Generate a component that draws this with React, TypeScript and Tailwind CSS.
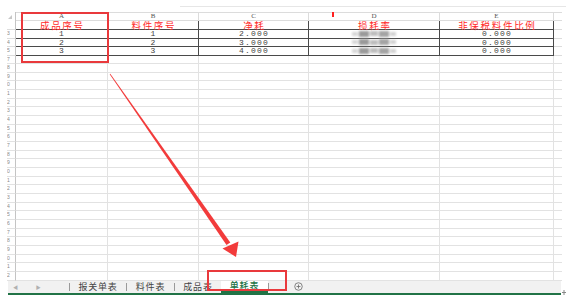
import clsx from "clsx";

const LIGHT = "border-[#dcdcdc]";

// column widths (border-box, right border sits on the grid line)
const cols = [
  { w: "w-[92px]", letter: "A", head: "成品序号", key: "a" },
  { w: "w-[91px]", letter: "B", head: "料件序号", key: "b" },
  { w: "w-[110px]", letter: "C", head: "净耗", key: "c" },
  { w: "w-[131px]", letter: "D", head: "损耗率", key: "d" },
  { w: "w-[114px]", letter: "E", head: "非保税料件比例", key: "e" },
];

const data = [
  { a: "1", b: "1", c: "2.000", e: "0.000" },
  { a: "2", b: "2", c: "3.000", e: "0.000" },
  { a: "3", b: "3", c: "4.000", e: "0.000" },
];

const emptyRows = Array.from({ length: 26 }, (_, i) => i + 7);

function RowHead({ n, h, dark }: { n?: number; h: string; dark?: boolean }) {
  return (
    <div className={clsx("w-[16px] shrink-0 flex", h)}>
      <div className="w-[7px]" />
      <div
        className={clsx(
          "flex-1 border-r-[1.5px] border-r-[#c4c4c4] border-b overflow-hidden text-[5px] leading-[7px] text-[#888] font-['Liberation_Sans',sans-serif]",
          dark ? "border-b-[#dcdcdc]" : "border-b-[#e2e2e2]"
        )}
      >
        {n !== undefined ? n % 10 : null}
      </div>
    </div>
  );
}

function Mosaic() {
  return (
    <div className="flex items-center gap-[1px] blur-[0.8px]">
      <div className="w-[6px] h-[4px] bg-[#d6d6d6]" />
      <div className="w-[10px] h-[6px] bg-[#9a9a9a]" />
      <div className="w-[8px] h-[5px] bg-[#bdbdbd]" />
      <div className="w-[10px] h-[6px] bg-[#a4a4a4]" />
      <div className="w-[6px] h-[4px] bg-[#d2d2d2]" />
    </div>
  );
}

function Sheet() {
  return (
    <div className="flex flex-col">
      {/* column letters */}
      <div className="flex h-[9px]">
        <div className="w-[16px] shrink-0 flex items-center justify-end pr-[3px] border-r-[1.5px] border-r-[#c4c4c4]">
          <svg width="4" height="4" viewBox="0 0 4 4">
            <polygon points="4,0 4,4 0,4" fill="#c8c8c8" />
          </svg>
        </div>
        {cols.map((c) => (
          <div
            key={c.key}
            className={clsx(
              c.w,
              "shrink-0 flex items-center justify-center border-r border-b border-t",
              LIGHT,
              "text-[7px] leading-[7px] text-[#555] font-['Liberation_Serif',serif]"
            )}
          >
            {c.letter}
          </div>
        ))}
        <div className={clsx("w-[8px] shrink-0 border-b border-t", LIGHT)} />
      </div>

      {/* red header row */}
      <div className="flex h-[9px]">
        <RowHead h="h-[9px]" dark />
        {cols.map((c, i) => (
          <div
            key={c.key}
            className={clsx(
              c.w,
              "shrink-0 flex items-center justify-center border-r border-b border-b-[#4a4a4a]",
              i === 0 ? "border-r-[#dcdcdc]" : "border-r-[#4a4a4a]",
              "text-[9.5px] leading-[8px] tracking-[1.7px] text-[#ff2a2a] font-['Noto_Sans_CJK_SC',sans-serif]"
            )}
          >
            <span className="pl-[1.7px]">{c.head}</span>
          </div>
        ))}
        <div className={clsx("w-[8px] shrink-0 border-b", LIGHT)} />
      </div>

      {/* data rows */}
      {data.map((r, ri) => (
        <div key={ri} className="flex h-[8.5px]">
          <RowHead n={ri + 3} h="h-[8.5px]" dark />
          {cols.map((c, i) => (
            <div
              key={c.key}
              className={clsx(
                c.w,
                "shrink-0 flex items-center justify-center border-r border-b border-b-[#4a4a4a]",
                i === 0 ? "border-r-[#dcdcdc]" : "border-r-[#4a4a4a]",
                "text-[8px] leading-[7px] tracking-[1.2px] text-[#444] font-['Liberation_Mono',monospace]"
              )}
            >
              {c.key === "d" ? <Mosaic /> : <span className="pl-[1.2px]">{r[c.key as "a" | "b" | "c" | "e"]}</span>}
            </div>
          ))}
          <div className={clsx("w-[8px] shrink-0 border-b", LIGHT)} />
        </div>
      ))}

      {/* empty rows */}
      {emptyRows.map((n) => (
        <div key={n} className="flex h-[8.67px]">
          <RowHead n={n} h="h-[8.67px]" />
          {cols.map((c) => (
            <div
              key={c.key}
              className={clsx(c.w, "shrink-0 border-r border-b", "border-[#e2e2e2]")}
            />
          ))}
          <div className="w-[8px] shrink-0 border-b border-[#e2e2e2]" />
        </div>
      ))}
    </div>
  );
}

function TabBar() {
  return (
    <div className="flex">
      <div className="ml-[8px] w-[554px] flex flex-col">
        <div className="h-[12px] bg-[#f1f1f1] flex items-stretch text-[9px] tracking-[0.8px] text-[#444] font-['Noto_Sans_CJK_SC',sans-serif]">
          <div className="w-[61px] flex items-center text-[5px] text-[#b0b0b0]">
            <span className="ml-[5px]">◀</span>
            <span className="ml-[17px]">▶</span>
          </div>
          <div className="w-px my-[2px] bg-[#9a9a9a]" />
          <div className="w-[56px] flex items-center justify-center">报关单表</div>
          <div className="w-px my-[2px] bg-[#9a9a9a]" />
          <div className="w-[47px] flex items-center justify-center">料件表</div>
          <div className="w-px my-[2px] bg-[#9a9a9a]" />
          <div className="w-[46px] flex items-center justify-center">成品表</div>
          <div className="w-[47px] bg-white border-b-2 border-[#217346] flex items-center justify-center text-[#217346] font-medium">
            单耗表
          </div>
          <div className="w-px my-[2px] bg-[#9a9a9a]" />
          <div className="ml-[25px] flex items-center">
            <svg width="9" height="9" viewBox="0 0 10 10">
              <circle cx="5" cy="5" r="4.2" fill="none" stroke="#6a6a6a" strokeWidth="0.9" />
              <path d="M5 2.8v4.4M2.8 5h4.4" stroke="#6a6a6a" strokeWidth="0.9" />
            </svg>
          </div>
        </div>
        <div className="h-[2px] bg-[#217346]" />
      </div>
      <div className="flex items-end pl-[1px]">
        <svg width="4" height="5" viewBox="0 0 4 5">
          <path d="M2 0v5M0 2.5h4" stroke="#888" strokeWidth="1" />
        </svg>
      </div>
    </div>
  );
}

function Annotations() {
  return (
    <>
      {/* red frame around column A */}
      <div className="absolute left-[21px] top-[12px] w-[88px] h-[51px] border-2 border-[#e9393c]" />
      {/* red frame around active tab */}
      <div className="absolute left-[207px] top-[270px] w-[80px] h-[21px] border-2 border-[#e9393c]" />
      {/* stray red tick */}
      <div className="absolute left-[332px] top-[12px] w-[2px] h-[5px] bg-[#ff2020]" />
      {/* arrow */}
      <svg className="absolute inset-0 pointer-events-none" width="566" height="305" viewBox="0 0 566 305">
        <polygon
          points="109.7,74.2 110.3,73.8 230.3,242.5 226.5,245.1"
          fill="#f23b3b"
        />
        <polygon points="222.5,248.5 238.5,241.5 236,257" fill="#f23b3b" />
      </svg>
    </>
  );
}

export default function App() {
  return (
    <div className="relative w-[566px] h-[305px] bg-white overflow-hidden">
      <div className="h-[12px] flex items-start">
        <div className="ml-[180px] mt-[6px] h-px flex-1 bg-[#e6e6e6]" />
      </div>
      <Sheet />
      <TabBar />
      <Annotations />
    </div>
  );
}
